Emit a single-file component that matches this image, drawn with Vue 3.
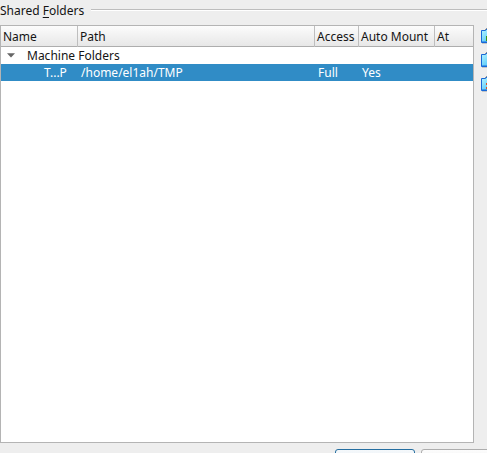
<script setup>
const columns = ['Name', 'Path', 'Access', 'Auto Mount', 'At']
const folder = ['T...P', '/home/el1ah/TMP', 'Full', 'Yes', '']
const actions = ['add', 'edit', 'remove']
</script>

<template>
  <main class="window">
    <div class="group-title">
      <span>Shared <u>F</u>olders</span>
      <i class="rule"></i>
    </div>
    <div class="content">
      <section class="tree">
        <div class="grid head">
          <span v-for="c in columns" :key="c">{{ c }}</span>
        </div>
        <div class="group">
          <svg class="arrow" width="8" height="5" viewBox="0 0 8 5"><path d="M0 .3h8L4 4.6z" fill="#666" /></svg>
          <span>Machine Folders</span>
        </div>
        <div class="grid item">
          <span v-for="(v, i) in folder" :key="i">{{ v }}</span>
        </div>
      </section>
      <aside class="tools">
        <svg v-for="a in actions" :key="a" width="16" height="16" viewBox="0 0 16 16">
          <defs>
            <linearGradient :id="'fill-' + a" x1="0" y1="0" x2="1" y2="1">
              <stop offset="0" stop-color="#b4f4ff" />
              <stop offset="1" stop-color="#2fb4f6" />
            </linearGradient>
          </defs>
          <path d="M1 15.5h15" stroke="#c4c4c4" />
          <path d="M.5 2.5h4v-1h7v1h4v12H.5z" :fill="`url(#fill-${a})`" stroke="#1768d8" />
          <path d="M1 14h15" stroke="#1768d8" />
          <path d="M4 1.5h1M5 .5h7" stroke="#8a8f98" />
          <path v-if="a === 'add'" d="M5 8h3V5h4v3h3v5H5z" fill="#3f9414" />
          <path v-if="a === 'remove'" d="M5 7h2v2H5zM5 11h2v2H5zM7 9h4v2H7z" fill="#dc5527" />
        </svg>
      </aside>
    </div>
    <footer class="buttons">
      <button class="primary"></button>
      <button></button>
    </footer>
  </main>
</template>

<style>
body {
  margin: 0;
  overflow: hidden;
  background: #eee;
}
</style>

<style scoped>
.window {
  width: 487px;
  height: 453px;
  overflow: hidden;
  background: #eee;
  color: #141414;
  font: 12px/17px "Noto Sans", sans-serif;
  white-space: nowrap;
}
.group-title {
  display: flex;
  height: 25px;
  line-height: 21px;
}
.group-title u {
  text-underline-offset: 2px;
}
.rule {
  flex: 1;
  height: 1px;
  margin: 9px 0 0 7px;
  background: #bdbdbd;
  border-bottom: 1px solid #fff;
}
.content {
  display: flex;
  height: 418px;
}
.tree {
  box-sizing: border-box;
  flex: none;
  width: 474px;
  border: 1px solid #b4b4b4;
  background: #fff;
}
.grid {
  display: grid;
  grid-template-columns: 77px 237px 44px 76px 38px;
}
.head {
  height: 20px;
  line-height: 21px;
  background: linear-gradient(#fcfcfc, #e7e7e7);
  border-bottom: 1px solid #adadad;
}
.head span {
  padding-left: 2px;
  border-right: 1px solid #bebebe;
}
.head span:last-child {
  border-right: 0;
}
.group {
  display: flex;
  align-items: center;
  height: 17px;
}
.arrow {
  margin: 0 12px 0 6px;
}
.item {
  height: 17px;
  background: #308cc6;
  color: #fff;
}
.item span {
  padding-left: 3px;
}
.item span:first-child {
  padding-left: 43px;
}
.tools {
  display: flex;
  flex-direction: column;
  gap: 8px;
  padding: 3px 0 0 7px;
}
.tools svg {
  flex: none;
}
.buttons {
  display: flex;
  gap: 6px;
  padding: 6px 0 0 335px;
}
button {
  box-sizing: border-box;
  flex: none;
  width: 80px;
  height: 25px;
  padding: 0;
  border: 1px solid #adadad;
  border-radius: 3px;
  background: linear-gradient(#fcfcfc, #e8e8e8);
}
.primary {
  border-color: #256ea0;
  background: linear-gradient(#f4f8fb, #e4ebf0);
}
</style>
